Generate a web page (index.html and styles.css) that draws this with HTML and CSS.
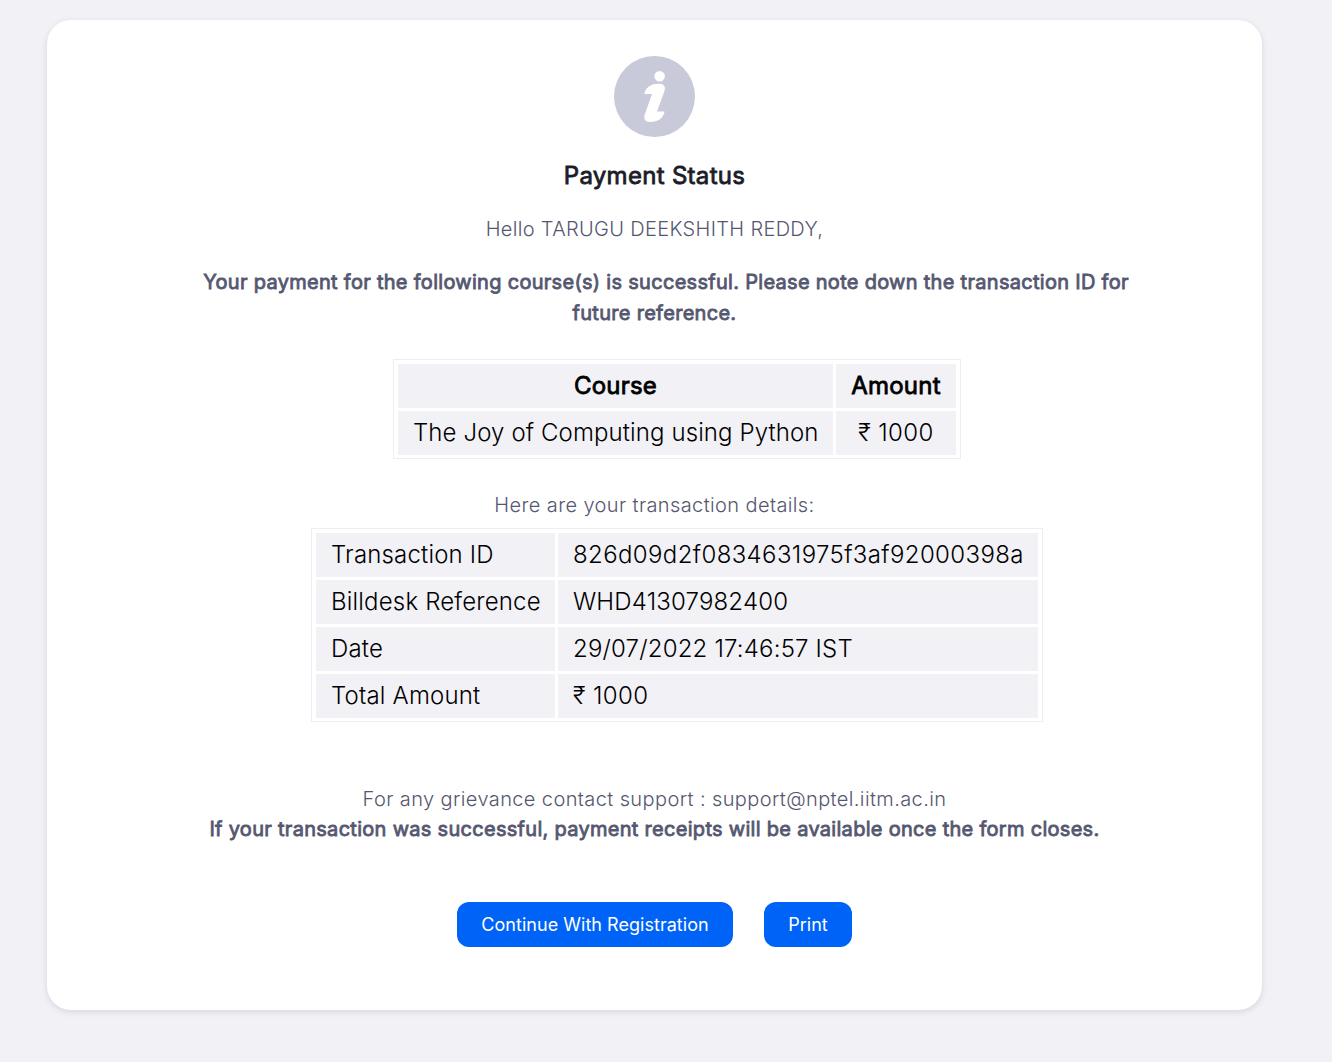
FILE: index.html
```html
<!DOCTYPE html>
<html lang="en">
<head>
<meta charset="utf-8">
<title>Payment Status</title>
<link rel="stylesheet" href="styles.css">
</head>
<body>
<main class="card">
  <svg class="info" viewBox="0 0 81 81" aria-hidden="true">
    <circle cx="40.5" cy="40.5" r="40.5" fill="#c8c9d9"/>
    <circle cx="45.6" cy="20.2" r="5.3" fill="#fff"/>
    <path d="M30.2 38C32 31 37 27.800 44.500 27.800C50 27.800 52 30.500 50.500 35L43 55.500H50.600C49.300 62.500 43.500 66 36.500 66C31 66 29.300 63 30.800 58.500L38 38Z" fill="#fff"/>
  </svg>
  <h1 class="title">Payment Status</h1>
  <p class="text hello">Hello TARUGU DEEKSHITH REDDY,</p>
  <p class="strong success"><span class="line line-first">Your payment for the following course(s) is successful. Please note down the transaction ID for</span><span class="line">future reference.</span></p>
  <table class="grid courses">
    <tr><th class="c-course">Course</th><th>Amount</th></tr>
    <tr><td class="course-name">The Joy of Computing using Python</td><td class="amount">₹ 1000</td></tr>
  </table>
  <p class="text details-label">Here are your transaction details:</p>
  <table class="grid details">
    <tr><td class="c-key">Transaction ID</td><td class="transaction-id">826d09d2f0834631975f3af92000398a</td></tr>
    <tr><td>Billdesk Reference</td><td>WHD41307982400</td></tr>
    <tr><td>Date</td><td>29/07/2022 17:46:57 IST</td></tr>
    <tr><td>Total Amount</td><td class="amount">₹ 1000</td></tr>
  </table>
  <p class="text support">For any grievance contact support : support@nptel.iitm.ac.in</p>
  <p class="strong receipts">If your transaction was successful, payment receipts will be available once the form closes.</p>
  <div class="actions">
    <button class="btn btn-continue">Continue With Registration</button>
    <button class="btn btn-print">Print</button>
  </div>
</main>
</body>
</html>
```

FILE: styles.css
```css
* { box-sizing: border-box; }
body { margin: 0; min-height: 100vh; padding: 20px 0 0 47px; background: #f1f1f6; font-family: Inter, "Noto Sans", sans-serif; color: #000; }
.card { width: 1215px; height: 990px; padding-top: 36px; background: #fff; border-radius: 24px; box-shadow: 0 2px 6px rgba(40, 41, 61, .13); display: flex; flex-direction: column; align-items: center; }
.info { flex: none; width: 81px; height: 81px; }
.title { margin: 23px 0 0; font-size: 24px; line-height: 32px; font-weight: 400; -webkit-text-stroke: .8px currentColor; letter-spacing: .3px; color: #1c1c28; white-space: nowrap; }
.text { margin: 0; font-size: 20px; line-height: 30px; font-weight: 300; letter-spacing: .39px; color: #555770; white-space: nowrap; }
.hello { margin-top: 22px; letter-spacing: .33px; }
.strong { margin: 0; font-size: 20px; line-height: 31px; font-weight: 400; -webkit-text-stroke: .8px currentColor; letter-spacing: .29px; color: #555770; white-space: nowrap; }
.success { margin-top: 23px; text-align: center; }
.line { display: block; }
.line-first { margin-left: 23px; }
.grid { margin-left: 45px; padding: 1px 1px 0; border: 1px solid #ededf2; border-spacing: 3px; font-size: 24px; table-layout: fixed; }
.grid td, .grid th { height: 44px; padding: 0 15px; background: #f1f1f6; line-height: 30px; white-space: nowrap; }
.grid td { font-weight: 300; letter-spacing: .18px; }
.grid .course-name { letter-spacing: .11px; }
.grid .amount { letter-spacing: .4px; }
.grid .transaction-id { letter-spacing: .38px; }
.grid th { font-weight: 400; -webkit-text-stroke: .8px currentColor; letter-spacing: .2px; padding: 0; }
.courses { width: 568px; margin-top: 30px; text-align: center; }
.c-course { width: 435px; }
.details-label { margin-top: 31px; }
.details { width: 732px; margin-top: 8px; }
.c-key { width: 239px; }
.support { margin-top: 62px; }
.actions { display: flex; gap: 31px; margin-top: 57px; }
.btn { height: 45px; border: 0; border-radius: 12px; padding: 0; background: #0063f7; color: #fff; font: 400 18px/26px Inter, sans-serif; letter-spacing: .03px; }
.btn-continue { width: 276px; }
.btn-print { width: 88px; }
```
